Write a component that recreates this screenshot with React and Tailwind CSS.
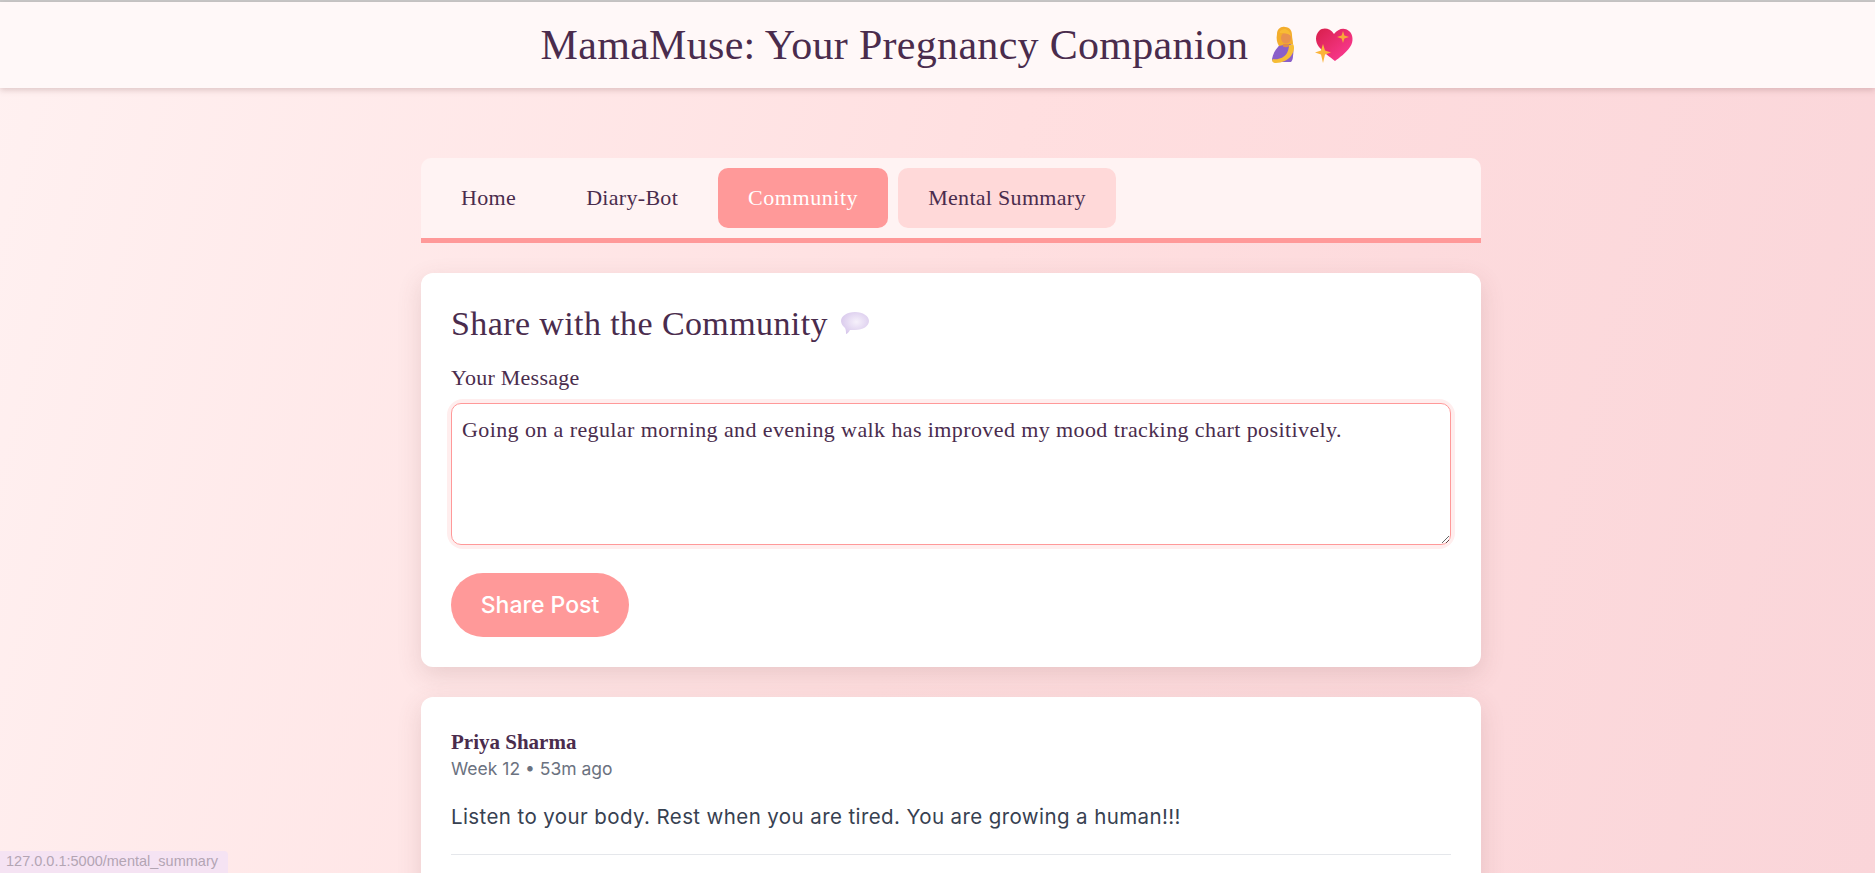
const serif = "font-['Liberation_Serif','Noto_Serif',serif]";

function Pregnant() {
  return (
    <svg width="29" height="38" viewBox="0 0 29 38" className="block">
      <path d="M9 21c2-4 8-6 12-4 3 2 4 7 3 13 0 3-1 5-2 6H7c-3 0-4-1-4-3 1-5 3-9 6-12z" fill="#8a5fc9" />
      <path d="M4 33c5 1 11-1 14-6 1-2 2-5 2-8l4-1c2 3 1 8-2 12-3 4-9 7-15 7-3 0-5-2-3-4z" fill="#f6bd35" />
      <path d="M8 8c0-5 4-8 8-7 5 0 7 4 7 8 0 3 1 6 1 9h-5l-9 2c-2-3-3-7-2-12z" fill="#f3ad2c" />
      <ellipse cx="17" cy="12" rx="5" ry="5.500" fill="#e8924f" />
      <path d="M11 7c3 0 8 0 11 3-1-5-4-7-7-7-3 1-5 2-4 4z" fill="#f8bb34" />
      <path d="M14 18h6v2.500c-2 1-4 1-6 0z" fill="#df8a4a" />
    </svg>
  );
}

function Heart() {
  return (
    <svg width="40" height="36" viewBox="0 0 40 36" className="block">
      <defs>
        <linearGradient id="hg" x1="0" y1="0" x2="1" y2="1">
          <stop offset="0" stopColor="#d81f4b" />
          <stop offset="1" stopColor="#ff3d9a" />
        </linearGradient>
      </defs>
      <path d="M20 7C16 1 9 0 5 4c-4 4-4 11 0 16 4 5 11 10 16 14 4-3 11-8 15-14 4-5 3-13-1-16-5-4-11-2-15 3z" fill="url(#hg)" />
      <path d="M29 4l1.400 4.600L35 10l-4.600 1.400L29 16l-1.400-4.600L23 10l4.600-1.400z" fill="#f9a63a" />
      <path d="M9 17l2 6.500L17 25.500l-6 2L9 36l-2-8.500-6-2 6-2z" fill="#fbb53a" />
    </svg>
  );
}

function Bubble() {
  return (
    <svg width="30" height="24" viewBox="0 0 30 24" className="block">
      <defs>
        <radialGradient id="bg" cx="0.55" cy="0.45" r="0.6">
          <stop offset="0" stopColor="#f6f1fb" />
          <stop offset="1" stopColor="#d8c8ec" />
        </radialGradient>
      </defs>
      <path d="M15 1c8 0 14 4 14 9s-6 9-14 9c-2 0-3 0-5 0-1 2-3 4-4 4 0-2 0-4-1-6C3 15 1 13 1 10 1 5 7 1 15 1z" fill="url(#bg)" />
    </svg>
  );
}

export default function App() {
  return (
    <div className="relative h-[873px] overflow-hidden bg-[linear-gradient(105deg,#fff1f1_0%,#ffdfe0_50%,#fad5d9_100%)]">
      <div className="h-[2px] bg-[#c9c9c9]" />
      <header className="flex h-[86px] items-center justify-center bg-[#fff8f8] pl-[20px] shadow-[0_2px_6px_rgba(120,70,70,0.25)]">
        <h1 className={`${serif} flex items-center text-[42px] leading-none tracking-[0.3px] text-[#4a2c4d]`}>
          <span>MamaMuse: Your Pregnancy Companion</span>
          <span className="ml-[21px]"><Pregnant /></span>
          <span className="ml-[16px]"><Heart /></span>
        </h1>
      </header>

      <main className="ml-[421px] mt-[70px] flex w-[1060px] flex-col">
        <nav className={`${serif} flex h-[85px] items-center gap-[10px] rounded-t-[10px] border-b-[5px] border-[#ff9999] bg-[#fff3f3] px-[10px] text-[22px] text-[#4a2c4d]`}>
          <a className="flex h-[60px] items-center rounded-[10px] px-[30px] pb-[2px] tracking-[0.35px]">Home</a>
          <a className="flex h-[60px] items-center rounded-[10px] px-[30px] pb-[2px] tracking-[0.3px]">Diary-Bot</a>
          <a className="flex h-[60px] items-center rounded-[10px] bg-[#ff9999] px-[30px] pb-[2px] tracking-[0.55px] text-white">Community</a>
          <a className="flex h-[60px] items-center rounded-[10px] bg-[#ffd9d9] px-[30px] pb-[2px] tracking-[0.3px]">Mental Summary</a>
        </nav>

        <section className="mt-[30px] h-[394px] rounded-[12px] bg-white px-[30px] pt-[30px] shadow-[0_8px_24px_rgba(120,70,70,0.16)]">
          <h2 className={`${serif} flex h-[40px] items-center text-[34px] tracking-[0.4px] text-[#4a2c4d]`}>
            <span>Share with the Community</span>
            <span className="ml-[12px]"><Bubble /></span>
          </h2>
          <label className={`${serif} mt-[21px] block text-[22px] leading-[28px] tracking-[0.25px] text-[#4a2c4d]`}>Your Message</label>
          <div className="mt-[11px] rounded-[12px] shadow-[0_0_0_4px_#ffeeee]">
            <textarea
              readOnly
              value="Going on a regular morning and evening walk has improved my mood tracking chart positively."
              className={`${serif} block h-[142px] w-full rounded-[10px] border border-[#ff9999] bg-white px-[10px] py-[12px] text-[22px] leading-[27px] tracking-[0.4px] text-[#4a2c4d] outline-none`}
            />
          </div>
          <button className="mt-[28px] block h-[64px] w-[178px] rounded-[32px] bg-[#ff9999] font-['Inter',sans-serif] text-[23px] font-medium text-white">
            Share Post
          </button>
        </section>

        <section className="mt-[30px] h-[300px] rounded-[12px] bg-white px-[30px] pt-[31px] shadow-[0_8px_24px_rgba(120,70,70,0.16)]">
          <div className={`${serif} text-[21px] font-bold leading-[28px] text-[#4a2c4d]`}>Priya Sharma</div>
          <div className="font-['Inter',sans-serif] text-[17.500px] leading-[26px] text-[#6b7280]">Week 12 • 53m ago</div>
          <p className="mt-[20px] font-['Inter',sans-serif] text-[20.500px] leading-[30px] tracking-[0.4px] text-[#374151]">
            Listen to your body. Rest when you are tired. You are growing a human!!!
          </p>
          <div className="mt-[22px] h-px bg-[#e5e7eb]" />
        </section>
      </main>

      <div className="absolute bottom-0 left-0 flex h-[22px] w-[228px] items-center rounded-tr-[4px] bg-[#f5e3f3] pl-[6px] font-['Liberation_Sans',sans-serif] text-[14.500px] text-[#b3a5b3]">
        127.0.0.1:5000/mental_summary
      </div>
    </div>
  );
}
